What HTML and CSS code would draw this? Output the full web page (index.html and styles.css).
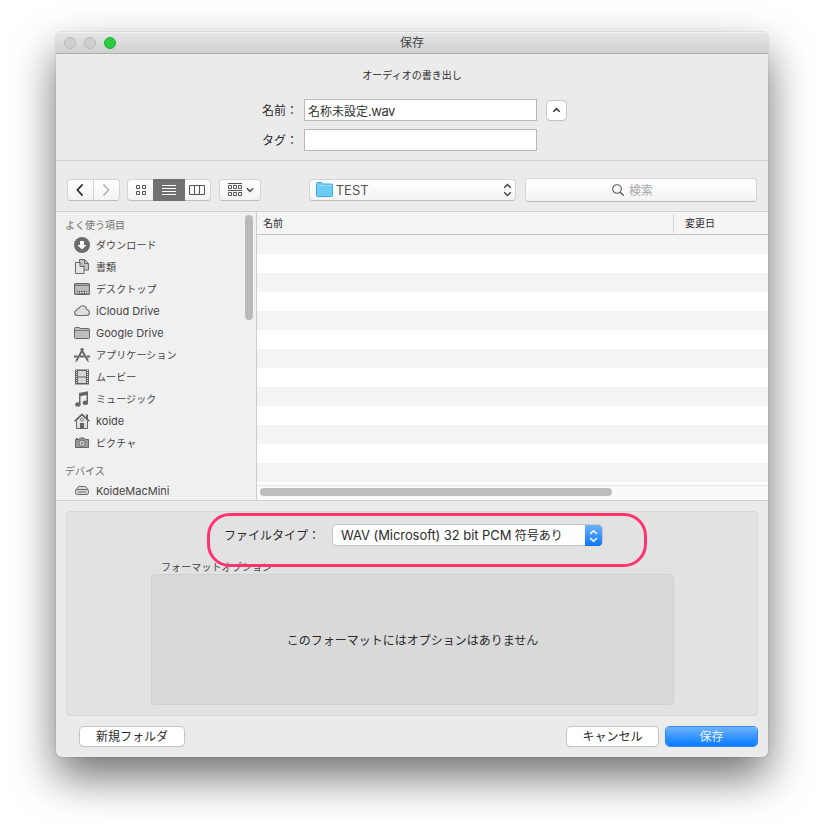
FILE: index.html
```html
<!DOCTYPE html>
<html lang="ja">
<head>
  <meta charset="UTF-8">
  <meta name="viewport" content="width=device-width, initial-scale=1.0">
  <title>保存</title>
  <link rel="stylesheet" href="styles.css">
</head>
<body>
  <div class="window">
    <div class="titlebar">
      <div class="lights">
        <span class="light"></span>
        <span class="light"></span>
        <span class="light green"></span>
      </div>
      <div class="title">保存</div>
    </div>

    <div class="header">
      <div class="subtitle">オーディオの書き出し</div>
      <div class="form-row">
        <label for="name">名前：</label>
        <div class="field" id="name">名称未設定<span class="latin">.wav</span></div>
        <button class="btn expand">
          <svg width="9" height="6" viewBox="0 0 9 6"><path d="M1.3 4.7 4.5 1.6l3.2 3.1" fill="none" stroke="#333" stroke-width="1.5"/></svg>
        </button>
      </div>
      <div class="form-row">
        <label for="tags">タグ：</label>
        <div class="field" id="tags"></div>
      </div>
    </div>

    <div class="toolbar">
      <div class="group nav">
        <button class="seg"><svg width="8" height="14" viewBox="0 0 8 14"><path d="M6.6 1.4 1.4 7l5.2 5.6" fill="none" stroke="#333" stroke-width="1.8"/></svg></button>
        <button class="seg"><svg width="8" height="14" viewBox="0 0 8 14"><path d="M1.4 1.4 6.6 7l-5.2 5.6" fill="none" stroke="#b4b4b4" stroke-width="1.6"/></svg></button>
      </div>
      <div class="group views">
        <button class="seg">
          <svg width="10" height="10" viewBox="0 0 10 10" fill="none" stroke="#555"><path d="M.5.5h3v3h-3zM6.5.5h3v3h-3zM.5 6.5h3v3h-3zM6.5 6.5h3v3h-3z"/></svg>
        </button>
        <button class="seg active">
          <svg width="14" height="10" viewBox="0 0 14 10" stroke="#fff"><path d="M0 .5h14M0 3.5h14M0 6.5h14M0 9.5h14"/></svg>
        </button>
        <button class="seg">
          <svg width="16" height="10" viewBox="0 0 16 10" fill="none" stroke="#555"><path d="M.5.5h15v9H.5zM5.5.5v9M10.5.5v9"/></svg>
        </button>
      </div>
      <div class="group arrange">
        <svg width="14" height="14" viewBox="0 0 14 14" fill="none" stroke="#555"><path d="M0 .5h14M0 7.5h14M.5 2.5h3v3h-3zM5.5 2.5h3v3h-3zM10.5 2.5h3v3h-3zM.5 9.5h3v3h-3zM5.5 9.5h3v3h-3zM10.5 9.5h3v3h-3z"/></svg>
        <svg width="8" height="6" viewBox="0 0 8 6"><path d="M.8 1.2 4 4.4l3.2-3.2" fill="none" stroke="#555" stroke-width="1.6"/></svg>
      </div>
      <div class="group location">
        <svg width="17" height="15" viewBox="0 0 17 15"><path d="M.5 13.5V1.5Q.5.5 1.5.5h4l1.5 1.5h8.5q1 0 1 1v10.5q0 1-1 1h-14q-1 0-1-1z" fill="#6ccbf7" stroke="#47a9d9"/><path d="M1 3.5h15" stroke="#8fdcff"/></svg>
        <span class="location-name">TEST</span>
        <svg width="9" height="14" viewBox="0 0 9 14"><path d="m1.2 4.7 3.3-3.2 3.3 3.2M1.2 9.3l3.3 3.2 3.3-3.2" fill="none" stroke="#444" stroke-width="1.5"/></svg>
      </div>
      <div class="search">
        <svg width="12" height="12" viewBox="0 0 12 12"><circle cx="5" cy="5" r="4.3" fill="none" stroke="#555" stroke-width="1.1"/><path d="m8 8 3.6 3.6" stroke="#555" stroke-width="1.3"/></svg>
        <span>検索</span>
      </div>
    </div>

    <div class="browser">
      <div class="sidebar">
        <div class="places">
          <div class="heading">よく使う項目</div>
          <div class="item">
            <svg viewBox="0 0 16 16"><circle cx="8" cy="8" r="8" fill="#6c6c6c"/><path d="M6 4h4v4h2.6L8 12.6 3.4 8H6z" fill="#fff"/></svg>
            <span>ダウンロード</span>
          </div>
          <div class="item">
            <svg viewBox="0 0 16 16" stroke="#666"><path d="M5.5.5h5l4 4V11h-9z" fill="#c4c4c4"/><path d="M10.5.5v4h4" fill="none"/><path d="M1.5 3.5H6l4 4v7H1.5z" fill="#e6e6e6"/><path d="M6 3.5v4h4" fill="#ccc"/></svg>
            <span>書類</span>
          </div>
          <div class="item">
            <svg viewBox="0 0 16 16"><rect x=".6" y="2.6" width="14.8" height="10.8" rx="1" fill="#bcbcbc" stroke="#686868" stroke-width="1.2"/><path d="M1 4.5h14" stroke="#777"/><path d="M3 10h10v3H3z" fill="#666"/><path d="M3.5 11.5h9" stroke="#fff" stroke-width="1.6" stroke-dasharray="1.5 1"/></svg>
            <span>デスクトップ</span>
          </div>
          <div class="item">
            <svg viewBox="0 0 16 16"><path d="M3.5 12.5C1.7 12.5.6 11.3.6 9.8c0-1.4.9-2.3 2.1-2.5C2.6 5.8 3.8 5 5 5.3 5.7 3.7 7 2.8 8.6 2.8c2.2 0 3.7 1.7 3.8 3.7 1.8.1 3 1.3 3 3 0 1.8-1.2 3-3 3z" fill="#dedede" stroke="#707070" stroke-width="1.1"/></svg>
            <span class="latin">iCloud Drive</span>
          </div>
          <div class="item">
            <svg viewBox="0 0 16 16"><path d="M.5 12.5v-9q0-1 1-1H5l1.5 1h8q1 0 1 1v8q0 1-1 1h-13q-1 0-1-1z" fill="#bdbdbd" stroke="#686868"/><path d="M1 5.5h14" stroke="#777"/></svg>
            <span class="latin">Google Drive</span>
          </div>
          <div class="item">
            <svg viewBox="0 0 16 16" fill="none" stroke="#666"><path d="M9.3 1.5 2.5 13.5M6.8 1.5l7 12" stroke-width="1.9"/><path d="M0 9.5h3.5M6 9.5h4.5M13 9.5h3" stroke-width="1.8"/><path d="M3 13.5l-1.5 1.2M13.5 13.5l1 1.5" stroke-width="1.2"/></svg>
            <span>アプリケーション</span>
          </div>
          <div class="item">
            <svg viewBox="0 0 16 16"><path d="M1 .5h14v15H1z" fill="#626262"/><path d="M4 2h8v5.5H4zM4 8.5h8V14H4z" fill="#d6d6d6"/><path d="M2.5 1v14M13.5 1v14" stroke="#e6e6e6" stroke-dasharray="1 1"/></svg>
            <span>ムービー</span>
          </div>
          <div class="item">
            <svg viewBox="0 0 16 16" fill="#666"><path d="M5 2 14 .3v11.2h-1.5V4l-6 1.3V13H5z"/><ellipse cx="3.9" cy="13.4" rx="2.7" ry="2.2"/><ellipse cx="11.4" cy="11.7" rx="2.7" ry="2.2"/></svg>
            <span>ミュージック</span>
          </div>
          <div class="item">
            <svg viewBox="0 0 16 16"><path d="M2.5 7.5v8h11v-8L8 2z" fill="#e2e2e2" stroke="#666"/><path d="M.5 8.3 8 1.2l7.5 7.1" fill="none" stroke="#666" stroke-width="1.5"/><path d="M12 1.5h2v5l-2-2zM6 10h4v5H6z" fill="#666"/><circle cx="8" cy="6.5" r="1.5" fill="none" stroke="#777"/></svg>
            <span class="latin">koide</span>
          </div>
          <div class="item">
            <svg viewBox="0 0 16 16"><path d="M1.500 4.500H5l1-1.500h4l1 1.500h3.500v8h-13z" fill="#9c9c9c" stroke="#666"/><path d="M2 3.500h2" stroke="#666"/><circle cx="8" cy="8.200" r="3.100" fill="#ddd" stroke="#666"/><circle cx="8" cy="8.200" r="1.400" fill="#888"/></svg>
            <span>ピクチャ</span>
          </div>
          <div class="heading devices">デバイス</div>
          <div class="item">
            <svg viewBox="0 0 16 16" fill="none" stroke="#666"><path d="M1.500 7.500 4 4.100q.5-.6 1.200-.6h5.600q.7 0 1.200.6l2.500 3.400" fill="#ddd"/><rect x="1.500" y="6.500" width="13" height="5" rx="1.800" fill="#ddd"/><path d="M3.500 9h9"/></svg>
            <span class="latin">KoideMacMini</span>
          </div>
        </div>
        <div class="vscroll"></div>
      </div>
      <div class="files">
        <div class="columns">
          <div class="col name">名前</div>
          <div class="col date">変更日</div>
        </div>
        <div class="rows"></div>
        <div class="hscroll"><div class="thumb"></div></div>
      </div>
    </div>

    <div class="bottom">
      <div class="options">
        <div class="type-row">
          <span class="type-label">ファイルタイプ：</span>
          <div class="select">
            <span class="value"><span class="latin">WAV (Microsoft) 32 bit PCM</span> 符号あり</span>
            <span class="arrows">
              <svg width="9" height="14" viewBox="0 0 9 14"><path d="m1.2 4.9 3.3-3.2 3.3 3.2M1.2 9.1l3.3 3.2 3.3-3.2" fill="none" stroke="#fff" stroke-width="1.5"/></svg>
            </span>
          </div>
          <div class="highlight"></div>
        </div>
        <div class="format-title">フォーマットオプション</div>
        <div class="format-box">このフォーマットにはオプションはありません</div>
      </div>
      <div class="actions">
        <button class="btn new-folder">新規フォルダ</button>
        <button class="btn cancel">キャンセル</button>
        <button class="btn save">保存</button>
      </div>
    </div>
  </div>
</body>
</html>
```
FILE: styles.css
```css
* {
  box-sizing: border-box;
}
body {
  margin: 0;
  padding: 32px 56px 0;
  height: 837px;
  overflow: hidden;
  background: #fff;
  font-family: Inter, "Noto Sans CJK JP", sans-serif;
  font-size: 12px;
  color: #2b2b2b;
}
svg {
  display: block;
  flex: none;
}
button {
  font: inherit;
  color: inherit;
  padding: 0;
  border: none;
  background: none;
}
.window {
  display: flex;
  flex-direction: column;
  width: 712px;
  height: 725px;
  border-radius: 5px;
  background: #ebebeb;
  box-shadow: 0 0 1px rgba(0, 0, 0, 0.6), 0 20px 44px rgba(0, 0, 0, 0.56);
}

/* title bar */
.titlebar {
  display: grid;
  grid-template-columns: 100px 1fr 100px;
  align-items: center;
  height: 22px;
  border-bottom: 1px solid #adadad;
  border-radius: 5px 5px 0 0;
  background: linear-gradient(#e6e6e6, #d0d0d0);
  box-shadow: inset 0 1px #f3f3f3;
}
.lights {
  display: flex;
  gap: 8px;
  padding-left: 8px;
}
.light {
  width: 12px;
  height: 12px;
  border: 1px solid #b9b9b9;
  border-radius: 50%;
  background: #cfcfcf;
}
.light.green {
  border-color: #1fae34;
  background: #28cd41;
}
.title {
  text-align: center;
  line-height: 20px;
  padding-top: 1px;
  color: #444;
}

/* name and tags */
.header {
  height: 107px;
  padding-top: 13px;
  border-bottom: 1px solid #d2d2d2;
}
.subtitle {
  height: 16px;
  margin-bottom: 16px;
  line-height: 16px;
  font-size: 10px;
  text-align: center;
}
.form-row {
  display: flex;
  align-items: center;
  height: 22px;
  margin-bottom: 8px;
}
.form-row label {
  width: 248px;
  padding: 1px 6px 0 0;
  line-height: 21px;
  text-align: right;
}
.field {
  width: 233px;
  height: 22px;
  padding: 1px 3px 0;
  border: 1px solid #b8b8b8;
  background: #fff;
  line-height: 20px;
  color: #333;
}
.field .latin {
  font-size: 13px;
  letter-spacing: -0.5px;
}
.btn {
  height: 19px;
  border-radius: 4px;
  background: #fff;
  line-height: 19px;
  box-shadow: 0 0 0 1px #c6c6c6, 0 1px 1px #aaa;
}
.expand {
  display: grid;
  place-items: center;
  width: 19px;
  margin-left: 10px;
}

/* toolbar */
.toolbar {
  display: flex;
  align-items: center;
  height: 51px;
  padding: 7px 11px 0;
  border-bottom: 1px solid #d0d0d0;
}
.group {
  display: flex;
  align-items: center;
  height: 22px;
  border: 1px solid #d3d3d3;
  border-bottom-color: #bdbdbd;
  border-radius: 4px;
  background: linear-gradient(#fff, #f3f3f3);
}
.seg {
  display: grid;
  place-items: center;
  height: 20px;
}
.nav {
  width: 53px;
  margin-right: 7px;
}
.nav .seg {
  flex: 1;
}
.nav .seg + .seg {
  border-left: 1px solid #d3d3d3;
}
.views {
  width: 84px;
  margin-right: 8px;
}
.views .seg {
  width: 25px;
}
.views .seg:first-child {
  padding-left: 1px;
}
.views .seg.active {
  width: 32px;
  height: 22px;
  background: #717171;
}
.arrange {
  width: 42px;
  gap: 4px;
  padding-left: 8px;
  margin-right: 48px;
}
.location {
  width: 208px;
  padding: 0 3px 0 6px;
  margin-right: 9px;
  gap: 3px;
}
.location-name {
  flex: 1;
  font-size: 13px;
  color: #555;
}
.search {
  display: flex;
  align-items: center;
  justify-content: center;
  gap: 5px;
  width: 233px;
  height: 24px;
  border: 1px solid #d6d6d6;
  border-bottom-color: #bdbdbd;
  border-radius: 4px;
  background: linear-gradient(#fff, #f3f3f3);
  color: #a8a8a8;
}
.search svg {
  margin-left: -17px;
}

/* file browser */
.browser {
  display: flex;
  height: 289px;
  border-bottom: 1px solid #cfcfcf;
}
.sidebar {
  display: flex;
  width: 201px;
  height: 288px;
  border-right: 1px solid #cdcdcd;
  background: #f0f0f0;
  overflow: hidden;
}
.places {
  flex: 1;
  padding-top: 4px;
}
.heading {
  height: 18px;
  padding-left: 9px;
  line-height: 18px;
  font-size: 10px;
  color: #6e6e6e;
}
.heading.devices {
  margin: 8px 0 0;
}
.item {
  display: flex;
  align-items: center;
  gap: 6px;
  height: 22px;
  padding-left: 18px;
  font-size: 10px;
  line-height: 22px;
  letter-spacing: 0.1px;
  color: #444;
}
.item span {
  height: 22px;
}
.item svg {
  width: 16px;
  height: 16px;
}
.item .latin {
  font-size: 11px;
  letter-spacing: 0;
}
.vscroll {
  width: 8px;
  height: 105px;
  margin: 3px 3px 0 0;
  border-radius: 4px;
  background: #bababa;
}
.files {
  flex: 1;
  display: flex;
  flex-direction: column;
  background: #fff;
}
.columns {
  display: flex;
  height: 23px;
  border-bottom: 1px solid #c1c1c1;
  background: #f5f5f5;
  font-size: 10px;
  line-height: 22px;
}
.col.name {
  width: 416px;
  padding-left: 6px;
}
.col.date {
  height: 19px;
  margin-top: 2px;
  padding-left: 11px;
  border-left: 1px solid #d6d6d6;
  line-height: 18px;
}
.rows {
  height: 247px;
  background: repeating-linear-gradient(#f4f4f4 0 19px, #fff 19px 38px);
}
.hscroll {
  height: 15px;
  margin-top: 3px;
  padding: 2px 3px;
  border-top: 1px solid #e4e4e4;
  background: #fafafa;
}
.thumb {
  width: 352px;
  height: 8px;
  border-radius: 4px;
  background: #bdbdbd;
}

/* export options */
.bottom {
  padding: 10px 10px 0;
}
.options {
  height: 205px;
  padding-top: 13px;
  border: 1px solid #d8d8d8;
  border-radius: 4px;
  background: #e2e2e2;
}
.type-row {
  position: relative;
  display: flex;
  height: 21px;
  padding-left: 157px;
}
.type-label {
  width: 109px;
  line-height: 22px;
}
.select {
  display: flex;
  width: 269px;
  height: 20px;
  border-radius: 4px;
  background: #fff;
  line-height: 20px;
  box-shadow: 0 0 0 1px #c6c6c6, 0 1px 1px #aaa;
}
.value {
  flex: 1;
  padding-left: 8px;
  white-space: nowrap;
}
.value .latin {
  font-size: 13px;
  letter-spacing: -0.07px;
}
.arrows {
  display: grid;
  place-items: center;
  width: 17px;
  height: 21px;
  border-radius: 0 4px 4px 0;
  background: linear-gradient(#6bb2fb, #0a79ff);
}
.highlight {
  position: absolute;
  left: 140px;
  top: -12px;
  width: 440px;
  height: 54px;
  border: 3px solid #ff3370;
  border-radius: 23px;
}
.format-title {
  height: 16px;
  margin: 12px 0 0 94px;
  padding-top: 1px;
  line-height: 16px;
  font-size: 10px;
  letter-spacing: 0.1px;
  color: #444;
}
.format-box {
  width: 523px;
  height: 131px;
  margin-left: 84px;
  border: 1px solid #d0d0d0;
  border-radius: 4px;
  background: #d9d9d9;
  line-height: 131px;
  text-align: center;
}
.actions {
  display: flex;
  padding: 11px 1px 0 14px;
}
.new-folder {
  width: 104px;
  margin-right: auto;
}
.cancel {
  width: 91px;
  margin-right: 8px;
}
.save {
  width: 91px;
  background: linear-gradient(#6cb3fa, #077aff);
  color: #e8f3ff;
  box-shadow: 0 0 0 1px #2f86f0;
}
```
